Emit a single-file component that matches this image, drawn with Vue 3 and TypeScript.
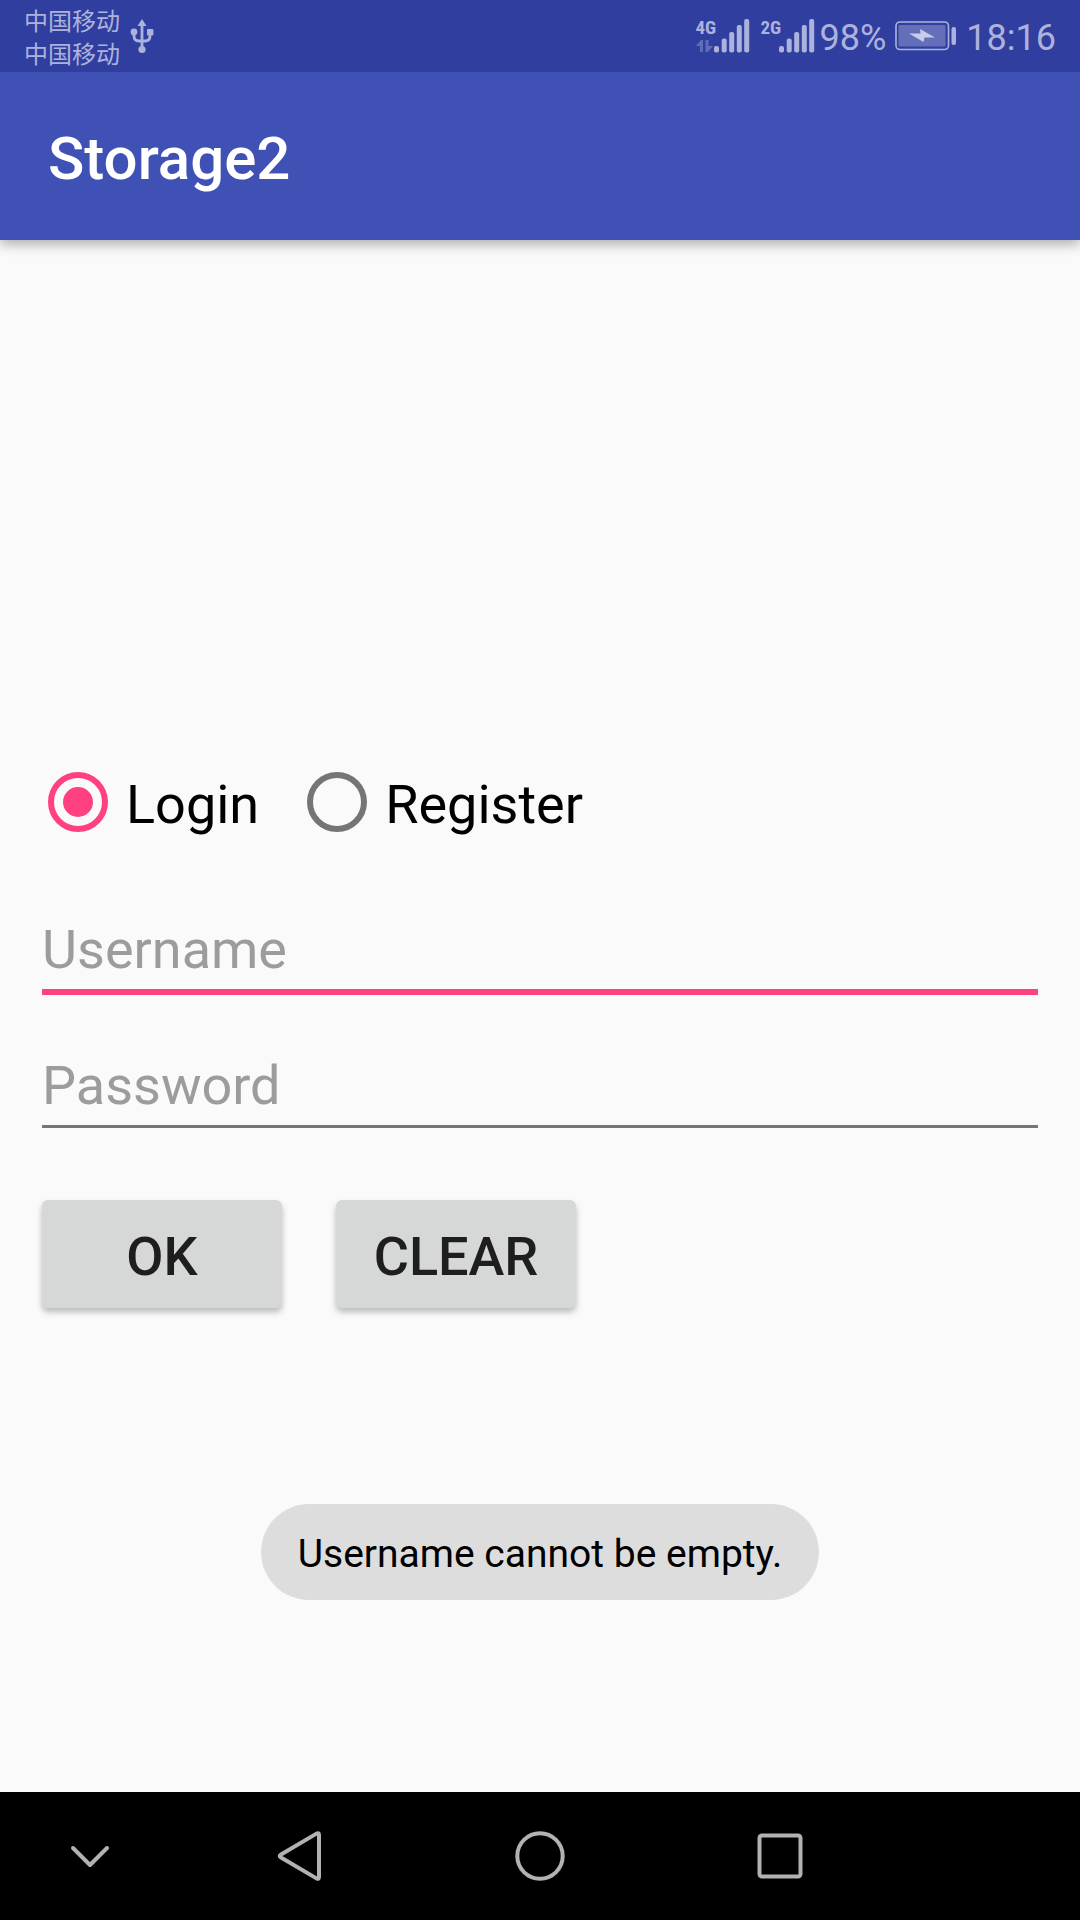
<script setup lang="ts">
import { ref } from 'vue'

type Field = 'username' | 'password'

interface Signal {
  label: string
  data: boolean
}

const signals: Signal[] = [
  { label: '4G', data: true },
  { label: '2G', data: false },
]

const mode = ref<'login' | 'register'>('login')
const username = ref('')
const password = ref('')
const activeField = ref<Field>('username')
const message = ref('Username cannot be empty.')

function submit(): void {
  if (!username.value) message.value = 'Username cannot be empty.'
  else if (!password.value) message.value = 'Password cannot be empty.'
  else message.value = ''
}

function clear(): void {
  username.value = ''
  password.value = ''
}
</script>

<template>
  <div class="screen">
    <div class="status">
      <div class="carriers">
        <span>中国移动</span>
        <span>中国移动</span>
      </div>
      <svg class="usb" width="24" height="36" viewBox="0 0 24 36" aria-hidden="true">
        <path d="M12 6v25M4 14v4q0 5 5 5h6q5 0 5-5v-4" fill="none" stroke="currentColor" stroke-width="2.8" />
        <path d="M12 1l4.500 7h-9z" fill="currentColor" />
        <circle cx="4" cy="14" r="3.4" fill="currentColor" />
        <rect x="17" y="11" width="6.4" height="6.4" rx="1" fill="currentColor" />
        <circle cx="12" cy="31.500" r="3.6" fill="currentColor" />
      </svg>

      <div class="system">
        <div v-for="signal in signals" :key="signal.label" class="signal">
          <div class="network">
            <span class="generation">{{ signal.label }}</span>
            <svg v-if="signal.data" width="17" height="12" viewBox="0 0 17 12" aria-hidden="true">
              <path d="M7 0v12H4V6H0L5 0zM9.500 0h3v6H17L12 12H9.500z" fill="currentColor" opacity="0.4" />
            </svg>
          </div>
          <svg width="36" height="34" viewBox="0 0 36 34" aria-hidden="true">
            <g fill="currentColor">
              <rect x="0" y="27" width="5" height="6.500" rx="2" />
              <rect x="7.700" y="19.500" width="5" height="14" rx="2" />
              <rect x="15.200" y="13" width="5" height="20.500" rx="2" />
              <rect x="22.800" y="6" width="5" height="27.500" rx="2" />
              <rect x="30.200" y="0" width="5" height="33.500" rx="2" />
            </g>
          </svg>
        </div>
        <span class="reading">98%</span>
        <svg class="battery" width="62" height="30" viewBox="0 0 62 30" aria-hidden="true">
          <rect x="1" y="1" width="52.500" height="27.500" rx="4" fill="none" stroke="currentColor" stroke-width="1.600" />
          <rect x="3.500" y="4" width="47" height="21.500" rx="1" fill="currentColor" opacity="0.42" />
          <path d="M14 12.500l11.500 0L25 8 40 16.500H29.500L28.500 21z" fill="#c9cbea" />
          <rect x="56.500" y="6" width="4.500" height="18" rx="2" fill="currentColor" />
        </svg>
        <span class="reading">18:16</span>
      </div>
    </div>

    <header class="app-bar">
      <h1>Storage2</h1>
    </header>

    <main>
      <form novalidate @submit.prevent="submit">
        <div class="modes">
          <label class="mode">
            <input v-model="mode" type="radio" name="mode" value="login" />
            <span>Login</span>
          </label>
          <label class="mode">
            <input v-model="mode" type="radio" name="mode" value="register" />
            <span>Register</span>
          </label>
        </div>

        <div class="fields">
          <input
            v-model="username"
            type="text"
            placeholder="Username"
            aria-label="Username"
            :class="{ active: activeField === 'username' }"
            @focus="activeField = 'username'"
          />
          <input
            v-model="password"
            type="password"
            placeholder="Password"
            aria-label="Password"
            :class="{ active: activeField === 'password' }"
            @focus="activeField = 'password'"
          />
        </div>

        <div class="actions">
          <button type="submit">OK</button>
          <button type="button" @click="clear">CLEAR</button>
        </div>
      </form>

      <div v-if="message" class="toast" role="status">{{ message }}</div>
    </main>

    <nav>
      <button type="button" aria-label="Hide navigation">
        <svg width="50" height="50" viewBox="0 0 50 50">
          <path d="M8 17l17 17 17-17" />
        </svg>
      </button>
      <button type="button" aria-label="Back">
        <svg width="50" height="50" viewBox="0 0 50 50">
          <path d="M41.500 2.600q2.500-1.200 2.500 1.400v42q0 2.600-2.500 1.400L6 26.500q-2.500-1.500 0-3z" />
        </svg>
      </button>
      <button type="button" aria-label="Home">
        <svg width="50" height="50" viewBox="0 0 50 50">
          <circle cx="25" cy="25" r="22.700" />
        </svg>
      </button>
      <button type="button" aria-label="Recent apps">
        <svg width="50" height="50" viewBox="0 0 50 50">
          <rect x="4.500" y="4.500" width="41" height="41" rx="2.500" />
        </svg>
      </button>
    </nav>
  </div>
</template>

<style>
body {
  margin: 0;
}
</style>

<style scoped>
.screen {
  display: flex;
  flex-direction: column;
  min-height: 100vh;
  background: #fafafa;
  color: #000;
  font-family: Roboto, "Noto Sans CJK SC", sans-serif;
}

.status {
  position: relative;
  z-index: 1;
  display: flex;
  align-items: center;
  box-sizing: border-box;
  height: 72px;
  padding: 0 24px;
  background: #303f9f;
  color: #adb2dd;
}

.carriers {
  display: flex;
  flex-direction: column;
  font-family: "Noto Sans CJK SC", sans-serif;
  font-size: 24px;
  line-height: 33px;
}

.usb {
  margin-left: 10px;
}

.system {
  display: flex;
  align-items: center;
  margin-left: auto;
  font-size: 36px;
  line-height: 68px;
}

.reading {
  padding-top: 4px;
}

.signal {
  display: flex;
  margin-right: 11px;
}

.signal + .signal {
  margin-right: 5px;
}

.network {
  display: flex;
  flex-direction: column;
  gap: 4px;
  width: 18px;
}

.generation {
  font-family: "Roboto Condensed", "Liberation Sans Narrow", Roboto, sans-serif;
  font-size: 19px;
  font-weight: 700;
  line-height: 17px;
}

.battery {
  margin: 0 9px;
}

.app-bar {
  display: flex;
  align-items: center;
  box-sizing: border-box;
  height: 168px;
  padding: 4px 48px 0;
  background: #3f51b5;
  color: #fff;
  box-shadow: 0 4px 12px rgba(0, 0, 0, 0.32);
}

h1 {
  margin: 0;
  font-size: 60px;
  font-weight: 500;
}

main {
  display: flex;
  flex: 1;
  flex-direction: column;
  padding: 532px 42px 192px;
}

.modes {
  display: flex;
  gap: 48px;
  padding-left: 6px;
}

.mode {
  display: flex;
  align-items: flex-start;
  gap: 18px;
  font-size: 54px;
  line-height: 66px;
}

.mode input {
  appearance: none;
  box-sizing: border-box;
  width: 60px;
  height: 60px;
  margin: 0;
  padding: 9px;
  border: 6px solid #757575;
  border-radius: 50%;
}

.mode input:checked {
  border-color: #ff4081;
  background: #ff4081 content-box;
}

.fields {
  display: grid;
  grid-auto-rows: 80px;
  align-items: start;
  gap: 56px;
  margin-top: 80px;
}

.fields input {
  width: 100%;
  height: 64px;
  box-sizing: content-box;
  padding: 0 0 7px;
  border: 0;
  border-bottom: 3px solid #757575;
  border-radius: 0;
  outline: 0;
  background: none;
  color: #212121;
  font: 54px/64px Roboto, sans-serif;
}

.fields input.active {
  border-bottom: 6px solid #ff4081;
}

.fields input::placeholder {
  color: #9c9c9c;
  opacity: 1;
}

.actions {
  display: flex;
  gap: 54px;
  margin-top: 66px;
}

.actions button {
  box-sizing: border-box;
  min-width: 240px;
  height: 108px;
  padding: 6px 24px 0;
  border: 0;
  border-radius: 6px;
  background: #d6d7d7;
  color: #1e1e1e;
  font: 500 54px/64px Roboto, sans-serif;
  box-shadow: 0 4px 6px rgba(0, 0, 0, 0.26);
}

.toast {
  align-self: center;
  box-sizing: border-box;
  margin-top: auto;
  padding: 4px 37px 0;
  border-radius: 48px;
  background: #dddddd;
  font-size: 39px;
  line-height: 92px;
}

nav {
  display: grid;
  grid-template-columns: 3fr 4fr 4fr 4fr 3fr;
  height: 128px;
  background: #000;
}

nav button {
  display: grid;
  place-items: center;
  padding: 0;
  border: 0;
  background: none;
}

nav svg {
  fill: none;
  stroke: #b2b2b2;
  stroke-width: 4;
  stroke-linecap: round;
  stroke-linejoin: round;
}
</style>
